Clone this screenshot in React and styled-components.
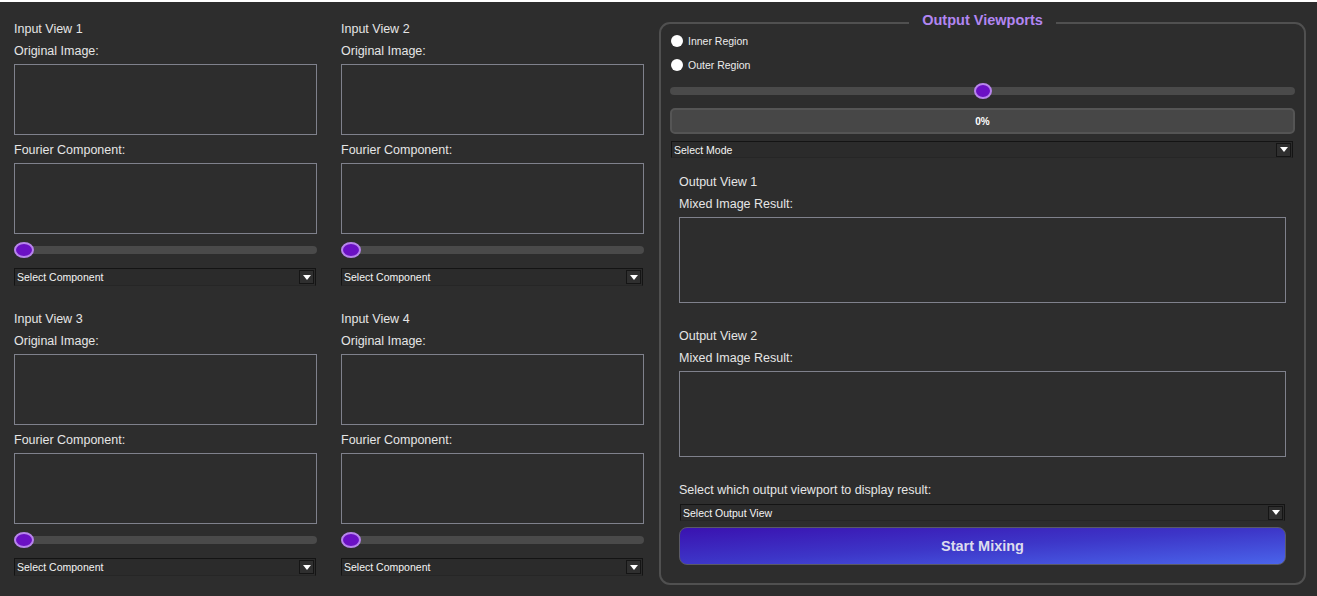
import React from 'react';
import styled, { createGlobalStyle } from 'styled-components';

const GlobalStyle = createGlobalStyle`
  html, body {
    margin: 0;
    padding: 0;
    background: #2d2d2d;
  }
  body {
    font-family: "Liberation Sans", Arial, sans-serif;
    color: #ececec;
  }
`;

const Page = styled.div`
  display: flex;
  align-items: flex-start;
  border-top: 2px solid #ffffff;
  height: 594px;
  background: #2d2d2d;
`;

const Inputs = styled.div`
  display: grid;
  grid-template-columns: 303px 303px;
  column-gap: 24px;
  row-gap: 24px;
  padding: 18px 0 0 14px;
`;

const ViewCard = styled.div`
  display: flex;
  flex-direction: column;
`;

const Label = styled.div`
  font-size: 12.5px;
  line-height: 18px;
  height: 16px;
  color: #e6e6e6;
  white-space: nowrap;
  margin-top: ${(p) => p.$mt || 0}px;
`;

const ImageBox = styled.div`
  box-sizing: border-box;
  height: ${(p) => p.$h || 71}px;
  border: 1px solid #7f818c;
  background: #2d2d2d;
  margin-top: ${(p) => p.$mt || 0}px;
`;

const SliderRow = styled.div`
  display: flex;
  align-items: center;
  height: 16px;
  margin-top: ${(p) => p.$mt || 0}px;
`;

const Track = styled.div`
  position: relative;
  flex: 1;
  height: 8px;
  border-radius: 4px;
  background: #4a4a4a;
`;

const Handle = styled.div`
  position: absolute;
  top: 50%;
  box-sizing: border-box;
  width: ${(p) => p.$w}px;
  height: 16px;
  margin-top: -8px;
  border-radius: 50%;
  background: #6b10c4;
  border: 2px solid #b884ec;
`;

const Dropdown = styled.div`
  box-sizing: border-box;
  display: flex;
  align-items: center;
  height: ${(p) => p.$h || 18}px;
  margin: ${(p) => p.$mt || 0}px ${(p) => p.$mr || 0}px 0 ${(p) => p.$ml || 0}px;
  border: 1px solid #141414;
  border-bottom-color: #262626;
  background: #2b2b2b;
  font-size: 10.5px;
  color: #f4f4f4;
  padding-left: 2px;
`;

const DropText = styled.span`
  flex: 1;
  white-space: nowrap;
`;

const ArrowBox = styled.div`
  display: flex;
  align-items: center;
  justify-content: center;
  width: 15px;
  height: 14px;
  margin-right: 1px;
  box-sizing: border-box;
  border: 1px solid #151515;
  background: #2f2f2f;
`;

const Group = styled.div`
  box-sizing: border-box;
  display: flex;
  flex-direction: column;
  width: 647px;
  margin: 20px 0 0 15px;
  padding: 0 9px 18px 9px;
  border: 2px solid #505050;
  border-radius: 11px;
`;

const Legend = styled.div`
  align-self: center;
  margin-top: -12px;
  padding: 0 13px;
  background: #2d2d2d;
  font-size: 14.5px;
  line-height: 16px;
  font-weight: bold;
  color: #b286f2;
`;

const RadioRow = styled.div`
  display: flex;
  align-items: center;
  gap: 5px;
  height: 16px;
  margin-top: ${(p) => p.$mt || 0}px;
  font-size: 10.5px;
  color: #ececec;
`;

const RadioDot = styled.span`
  width: 12px;
  height: 12px;
  margin-left: 1px;
  border-radius: 50%;
  background: #ffffff;
`;

const Progress = styled.div`
  box-sizing: border-box;
  display: flex;
  align-items: center;
  justify-content: center;
  height: 26px;
  margin-top: 9px;
  border: 2px solid #555555;
  border-radius: 5px;
  background: #474747;
  font-size: 10px;
  font-weight: bold;
  color: #ffffff;
`;

const OutputSection = styled.div`
  display: flex;
  flex-direction: column;
  margin: 0 9px;
`;

const MixButton = styled.button`
  box-sizing: border-box;
  height: 38px;
  margin-top: 6px;
  border: 1px solid #5a5a66;
  border-radius: 8px;
  background: linear-gradient(to bottom right, #3a12b0 0%, #3d36c8 50%, #4a64ea 100%);
  font-family: "Liberation Sans", Arial, sans-serif;
  font-size: 14.5px;
  font-weight: bold;
  color: #dcdcee;
  cursor: pointer;
`;

function Arrow() {
  return (
    <ArrowBox>
      <svg width="8" height="5" viewBox="0 0 8 5">
        <path d="M0 0 H8 L4 5 Z" fill="#ffffff" />
      </svg>
    </ArrowBox>
  );
}

function Select({ text, ...rest }) {
  return (
    <Dropdown {...rest}>
      <DropText>{text}</DropText>
      <Arrow />
    </Dropdown>
  );
}

function Slider({ value, handleWidth, mt }) {
  return (
    <SliderRow $mt={mt}>
      <Track>
        <Handle
          $w={handleWidth}
          style={{ left: `calc(${value}% - ${(handleWidth * value) / 100}px)` }}
        />
      </Track>
    </SliderRow>
  );
}

function InputView({ n }) {
  return (
    <ViewCard>
      <Label>Input View {n}</Label>
      <Label $mt={6}>Original Image:</Label>
      <ImageBox $mt={6} />
      <Label $mt={6}>Fourier Component:</Label>
      <ImageBox $mt={6} />
      <Slider value={0} handleWidth={20} mt={8} />
      <Select text="Select Component" $mt={10} $mr={1} />
    </ViewCard>
  );
}

function OutputView({ n, mt }) {
  return (
    <>
      <Label $mt={mt}>Output View {n}</Label>
      <Label $mt={6}>Mixed Image Result:</Label>
      <ImageBox $mt={6} $h={86} />
    </>
  );
}

export default function App() {
  return (
    <>
      <GlobalStyle />
      <Page>
        <Inputs>
          {[1, 2, 3, 4].map((n) => (
            <InputView key={n} n={n} />
          ))}
        </Inputs>
        <Group>
          <Legend>Output Viewports</Legend>
          <RadioRow $mt={5}>
            <RadioDot />
            Inner Region
          </RadioRow>
          <RadioRow $mt={8}>
            <RadioDot />
            Outer Region
          </RadioRow>
          <Slider value={50} handleWidth={18} mt={10} />
          <Progress>0%</Progress>
          <Select text="Select Mode" $mt={7} $ml={1} $mr={2} $h={17} />
          <OutputSection>
            <OutputView n={1} mt={15} />
            <OutputView n={2} mt={24} />
            <Label $mt={24}>Select which output viewport to display result:</Label>
            <Select text="Select Output View" $mt={7} $ml={1} $mr={1} $h={17} />
            <MixButton>Start Mixing</MixButton>
          </OutputSection>
        </Group>
      </Page>
    </>
  );
}
